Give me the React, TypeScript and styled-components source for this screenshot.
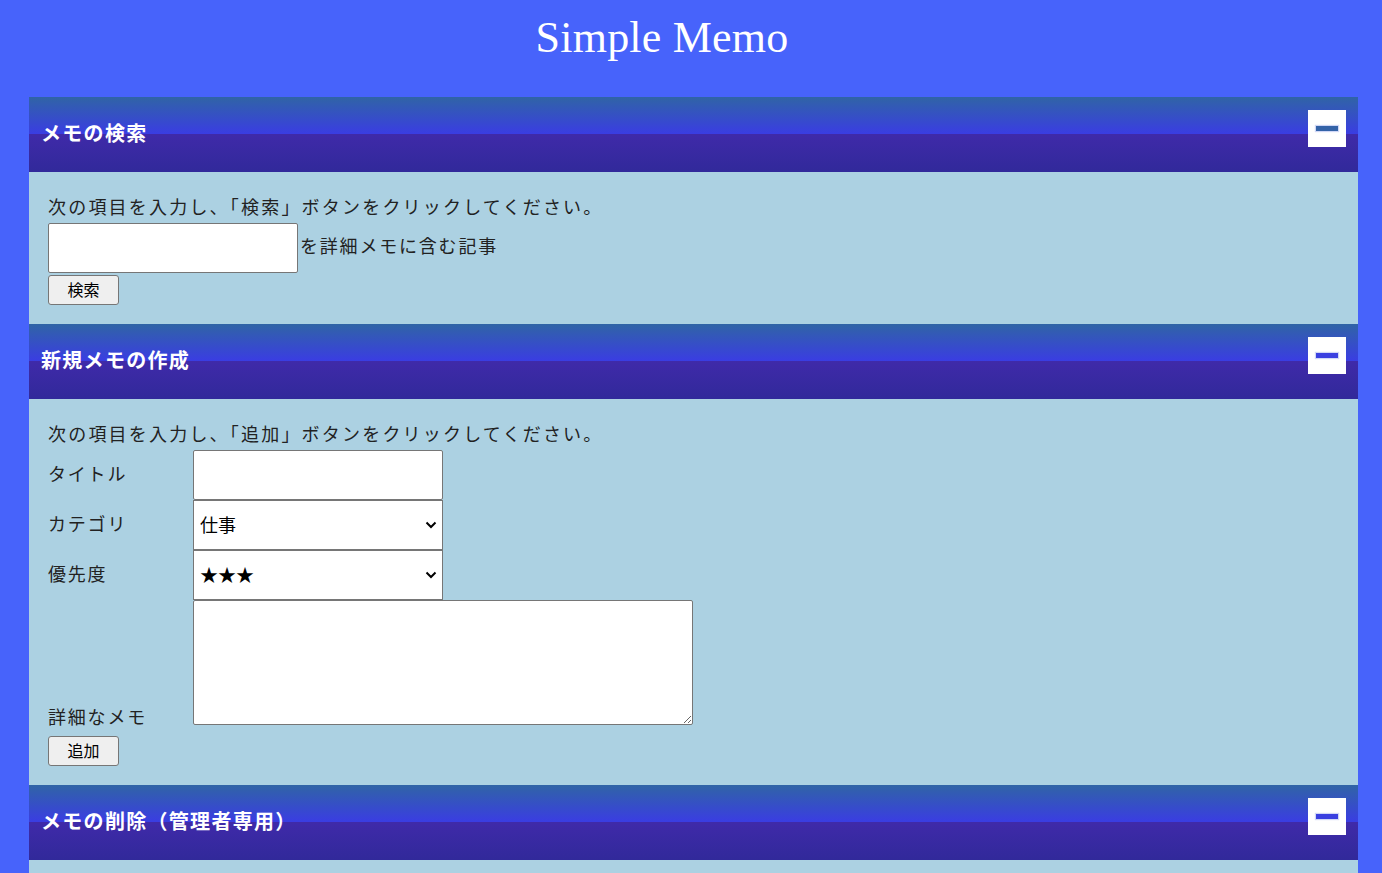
import React from "react";
import styled, { createGlobalStyle } from "styled-components";

const GlobalStyle = createGlobalStyle`
  html, body {
    margin: 0;
    padding: 0;
    background: #4763fb;
    overflow: hidden;
  }
  body {
    font-family: "Noto Sans CJK JP", "Liberation Serif", serif;
    color: #222;
  }
`;

const Page = styled.div`
  display: flex;
  flex-direction: column;
  padding: 0 24px 0 29px;
  min-height: 873px;
  box-sizing: border-box;
`;

const TitleBar = styled.header`
  height: 97px;
  display: flex;
  justify-content: center;
  padding-right: 63px;
  box-sizing: border-box;
`;

const Title = styled.h1`
  margin: 0;
  padding-top: 12px;
  font-family: "Liberation Serif", serif;
  font-weight: normal;
  font-size: 44px;
  line-height: 52px;
  letter-spacing: 0.2px;
  color: #ffffff;
`;

const Section = styled.section`
  display: flex;
  flex-direction: column;
`;

const SectionHeader = styled.div`
  height: 75px;
  display: flex;
  align-items: center;
  justify-content: space-between;
  padding: 0 12px 0 12px;
  background: linear-gradient(
    to bottom,
    #3064a6 0%,
    #3a3de2 49%,
    #3f2aa9 50%,
    #31299a 100%
  );
`;

const SectionTitle = styled.h2`
  margin: -4px 0 0 0;
  font-family: "Noto Sans CJK JP", sans-serif;
  font-weight: bold;
  font-size: 20px;
  letter-spacing: 1.3px;
  color: #ffffff;
`;

const ToggleButton = styled.div`
  width: 38px;
  height: 37px;
  background: #ffffff;
  display: flex;
  align-items: center;
  justify-content: center;
  margin-top: -12px;
`;

const MinusBar = styled.div<{ $tone: string }>`
  width: 22px;
  height: 5px;
  background: ${(p) => p.$tone};
  box-shadow: 0 0 1px 1px rgba(120, 140, 230, 0.35);
`;

const SectionBody = styled.div<{ $empty?: boolean }>`
  background: #acd1e2;
  padding: ${(p) => (p.$empty ? "0" : "22px 19px 19px 19px")};
  min-height: ${(p) => (p.$empty ? "20px" : "0")};
  display: flex;
  flex-direction: column;
  align-items: flex-start;
`;

const Instruction = styled.p`
  margin: 0 0 4px 0;
  font-size: 18px;
  line-height: 25px;
  letter-spacing: 2.2px;
  color: #222;
`;

const InlineRow = styled.div`
  display: flex;
  align-items: center;
  font-size: 18px;
  letter-spacing: 1.8px;
`;

const AfterText = styled.span`
  padding-bottom: 6px;
`;

const TextInput = styled.input`
  width: 250px;
  height: 50px;
  box-sizing: border-box;
  border: 1px solid #767676;
  border-radius: 2px;
  background: #fff;
  margin: 0 2px 0 0;
  padding: 0 6px;
`;

const SelectWrap = styled.div`
  position: relative;
  width: 250px;
  height: 50px;
`;

const Select = styled.select`
  appearance: none;
  -webkit-appearance: none;
  width: 250px;
  height: 50px;
  box-sizing: border-box;
  border: 1px solid #767676;
  border-radius: 0;
  background: #fff;
  font-family: "Noto Sans CJK JP", "DejaVu Sans", sans-serif;
  font-size: 18px;
  color: #000;
  padding: 0 30px 2px 6px;
  margin: 0;
`;

const Chevron = styled.svg`
  position: absolute;
  right: 6px;
  top: 21px;
  width: 12px;
  height: 8px;
  pointer-events: none;
`;

const TextArea = styled.textarea`
  width: 500px;
  height: 125px;
  box-sizing: border-box;
  border: 1px solid #767676;
  border-radius: 2px;
  background: #fff;
  margin: 0;
  resize: both;
`;

const FormRow = styled.div<{ $bottom?: boolean }>`
  display: flex;
  align-items: ${(p) => (p.$bottom ? "flex-end" : "center")};
`;

const Label = styled.span<{ $bottom?: boolean }>`
  width: 145px;
  font-size: 18px;
  letter-spacing: 1.8px;
  color: #222;
  padding-bottom: ${(p) => (p.$bottom ? "0" : "5px")};
  margin-bottom: ${(p) => (p.$bottom ? "-2px" : "0")};
  line-height: 22px;
`;

const Button = styled.button<{ $gap: number }>`
  margin-top: ${(p) => p.$gap}px;
  width: 71px;
  height: 30px;
  box-sizing: border-box;
  font-family: "Noto Sans CJK JP", sans-serif;
  font-size: 16px;
  color: #000;
  background: #efefef;
  border: 1px solid #767676;
  border-radius: 3px;
  padding: 0 0 3px 0;
  line-height: 1;
`;

function Header({ title, tone }: { title: string; tone: string }) {
  return (
    <SectionHeader>
      <SectionTitle>{title}</SectionTitle>
      <ToggleButton>
        <MinusBar $tone={tone} />
      </ToggleButton>
    </SectionHeader>
  );
}

function DropDown({ children, value }: { children: React.ReactNode; value: string }) {
  return (
    <SelectWrap>
      <Select defaultValue={value}>{children}</Select>
      <Chevron viewBox="0 0 12 8">
        <path d="M1.5 1.5 L6 6 L10.5 1.5" fill="none" stroke="#000" strokeWidth="2" />
      </Chevron>
    </SelectWrap>
  );
}

export default function App() {
  return (
    <>
      <GlobalStyle />
      <Page>
        <TitleBar>
          <Title>Simple Memo</Title>
        </TitleBar>

        <Section>
          <Header title="メモの検索" tone="#3463a8" />
          <SectionBody>
            <Instruction>次の項目を入力し、「検索」ボタンをクリックしてください。</Instruction>
            <InlineRow>
              <TextInput type="text" />
              <AfterText>を詳細メモに含む記事</AfterText>
            </InlineRow>
            <Button $gap={2}>検索</Button>
          </SectionBody>
        </Section>

        <Section>
          <Header title="新規メモの作成" tone="#3a40e0" />
          <SectionBody>
            <Instruction>次の項目を入力し、「追加」ボタンをクリックしてください。</Instruction>
            <FormRow>
              <Label>タイトル</Label>
              <TextInput type="text" />
            </FormRow>
            <FormRow>
              <Label>カテゴリ</Label>
              <DropDown value="work">
                <option value="work">仕事</option>
                <option value="private">プライベート</option>
              </DropDown>
            </FormRow>
            <FormRow>
              <Label>優先度</Label>
              <DropDown value="3">
                <option value="3">★★★</option>
                <option value="2">★★</option>
                <option value="1">★</option>
              </DropDown>
            </FormRow>
            <FormRow $bottom>
              <Label $bottom>詳細なメモ</Label>
              <TextArea />
            </FormRow>
            <Button $gap={11}>追加</Button>
          </SectionBody>
        </Section>

        <Section>
          <Header title="メモの削除（管理者専用）" tone="#3a40e0" />
          <SectionBody $empty />
        </Section>
      </Page>
    </>
  );
}
